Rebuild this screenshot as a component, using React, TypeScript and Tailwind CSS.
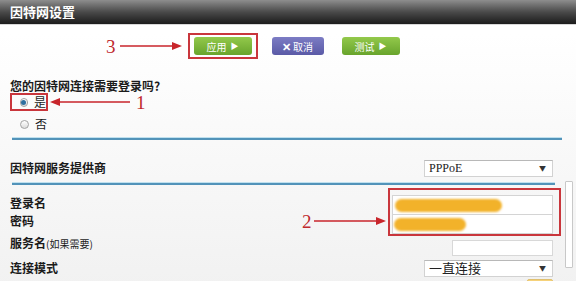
import type { ReactNode } from "react";

// 红色标注箭头：dir 指向方向
function Arrow({ width, dir }: { width: number; dir: "left" | "right" }) {
  const head =
    dir === "right"
      ? `${width - 10},0 ${width},4 ${width - 10},8`
      : `10,0 0,4 10,8`;
  return (
    <svg width={width} height={8} viewBox={`0 0 ${width} 8`} className="shrink-0">
      <line
        x1={dir === "right" ? 0 : 9}
        y1={4}
        x2={dir === "right" ? width - 9 : width}
        y2={4}
        stroke="#c8252b"
        strokeWidth={1.5}
      />
      <polygon points={head} fill="#c8252b" />
    </svg>
  );
}

function Mark({ children }: { children: ReactNode }) {
  return (
    <span className="font-['Liberation_Serif',serif] text-[19px] leading-none text-[#c0282d]">
      {children}
    </span>
  );
}

function Radio({ checked }: { checked?: boolean }) {
  return (
    <span className="flex h-[9px] w-[9px] items-center justify-center rounded-full border border-[#a3a3a3] bg-gradient-to-b from-white to-[#dcdcdc]">
      {checked ? <span className="h-[5px] w-[5px] rounded-full bg-[#2f6f9f]" /> : null}
    </span>
  );
}

function SelectBox({ value, serif }: { value: string; serif?: boolean }) {
  return (
    <div className="flex h-[17px] w-[129px] items-center justify-between border border-[#d2d2d2] border-t-[#b8b8b8] bg-white pl-[4px] pr-[6px]">
      <span
        className={
          serif
            ? "font-['Liberation_Serif',serif] text-[12px] text-[#222]"
            : "text-[13px] text-[#222]"
        }
      >
        {value}
      </span>
      <span className="text-[7px] text-[#333]">▼</span>
    </div>
  );
}

function Blob({ width }: { width: number }) {
  return (
    <div
      className="h-[13px] rounded-full bg-[#f2b22a] blur-[1px]"
      style={{ width }}
    />
  );
}

export default function App() {
  return (
    <div className="h-[281px] w-[576px] overflow-hidden bg-white font-['Noto_Sans_CJK_SC','Noto_Sans',sans-serif] text-[#1b1b1b]">
      <div className="flex h-[25px] items-center border-b border-[#d8d8d8] bg-gradient-to-b from-[#8e8e8e] via-[#4a4a4a] to-[#1c1c1c] pl-[10px]">
        <span className="text-[13px] font-bold text-white">因特网设置</span>
      </div>

      <div className="relative h-[256px] bg-gradient-to-b from-white to-[#f1f1f1]">
        {/* 按钮行 */}
        <div className="mt-[8px] flex h-[26px] items-center pl-[106px]">
          <Mark>3</Mark>
          <span className="ml-[4px]">
            <Arrow width={62} dir="right" />
          </span>
          <div className="ml-[6px] flex h-[26px] w-[70px] items-center justify-center border-2 border-[#c9363c]">
            <div className="flex h-[18px] w-[58px] items-center justify-center gap-1 rounded-[3px] bg-gradient-to-b from-[#93c94b] to-[#68a42c] text-[10px] text-white">
              应用 <span className="text-[8px]">▶</span>
            </div>
          </div>
          <div className="ml-[14px] flex h-[18px] w-[52px] items-center justify-center gap-[2px] rounded-[3px] bg-gradient-to-b from-[#7c7cc4] to-[#5a5aa6] text-[10px] text-white">
            <span className="text-[11px] font-bold">✕</span>取消
          </div>
          <div className="ml-[18px] flex h-[18px] w-[58px] items-center justify-center gap-1 rounded-[3px] bg-gradient-to-b from-[#93c94b] to-[#68a42c] text-[10px] text-white">
            测试 <span className="text-[8px]">▶</span>
          </div>
        </div>

        {/* 登录问题 */}
        <div className="mt-[20px] pl-[10px] text-[12px] font-bold leading-[14px]">
          您的因特网连接需要登录吗?
        </div>
        <div className="flex h-[18px] items-center pl-[10px]">
          <div className="flex h-[18px] w-[38px] items-center gap-[6px] border-2 border-[#c9363c] pl-[8px]">
            <Radio checked />
            <span className="text-[12px] leading-none">是</span>
          </div>
          <span className="ml-[2px]">
            <Arrow width={80} dir="left" />
          </span>
          <span className="ml-[6px]">
            <Mark>1</Mark>
          </span>
        </div>
        <div className="mt-[5px] flex h-[16px] items-center gap-[6px] pl-[20px]">
          <Radio />
          <span className="text-[12px] leading-none">否</span>
        </div>

        <div className="ml-[12px] mt-[6px] h-[2px] w-[550px] bg-[#5293b9] shadow-[0_-1px_0_#bfe0ee]" />

        {/* 服务提供商 */}
        <div className="mt-[18px] flex h-[20px] items-center justify-between pl-[10px] pr-[23px]">
          <span className="text-[12px] font-bold">因特网服务提供商</span>
          <SelectBox value="PPPoE" serif />
        </div>

        <div className="ml-[12px] mt-[5px] h-[2px] w-[543px] bg-[#5293b9] shadow-[0_-1px_0_#bfe0ee]" />

        {/* 登录名 / 密码 */}
        <div className="mt-[3px] flex pl-[10px]">
          <div className="flex w-[292px] flex-col gap-[2px] pt-[7px] text-[12px] font-bold leading-[16px]">
            <span>登录名</span>
            <span>密码</span>
          </div>
          <div className="flex items-center pt-[18px]">
            <Mark>2</Mark>
            <span className="ml-[2px]">
              <Arrow width={72} dir="right" />
            </span>
          </div>
          <div className="ml-[2px] flex w-[173px] flex-col border-2 border-[#c9363c] pl-[2px] pr-[6px] pt-[5px]">
            <div className="flex h-[20px] items-center border border-[#d4d4d4] bg-white pl-[2px]">
              <Blob width={107} />
            </div>
            <div className="-mt-px flex h-[20px] items-center border border-[#d4d4d4] bg-white pl-[1px]">
              <Blob width={72} />
            </div>
          </div>
        </div>

        {/* 服务名 */}
        <div className="flex items-start justify-between pl-[10px] pr-[23px]">
          <span className="text-[12px] leading-[14px]">
            <span className="font-bold">服务名</span>
            <span className="text-[10px]">(如果需要)</span>
          </span>
          <div className="mt-[4px] h-[16px] w-[101px] border border-[#d8d8d8] bg-white" />
        </div>

        {/* 连接模式 */}
        <div className="mt-[3px] flex items-center justify-between pl-[10px] pr-[23px]">
          <span className="text-[12px] font-bold">连接模式</span>
          <SelectBox value="一直连接" />
        </div>
        <div className="mt-[2px] flex justify-end pr-[23px]">
          <div className="h-[10px] w-[26px] rounded-[2px] border border-[#e0c070] bg-[#f6d27a]" />
        </div>

        <div className="absolute right-[3px] top-[148px] h-[87px] w-[8px] rounded-[1px] border border-[#c8c8c8] bg-white" />
      </div>
    </div>
  );
}
